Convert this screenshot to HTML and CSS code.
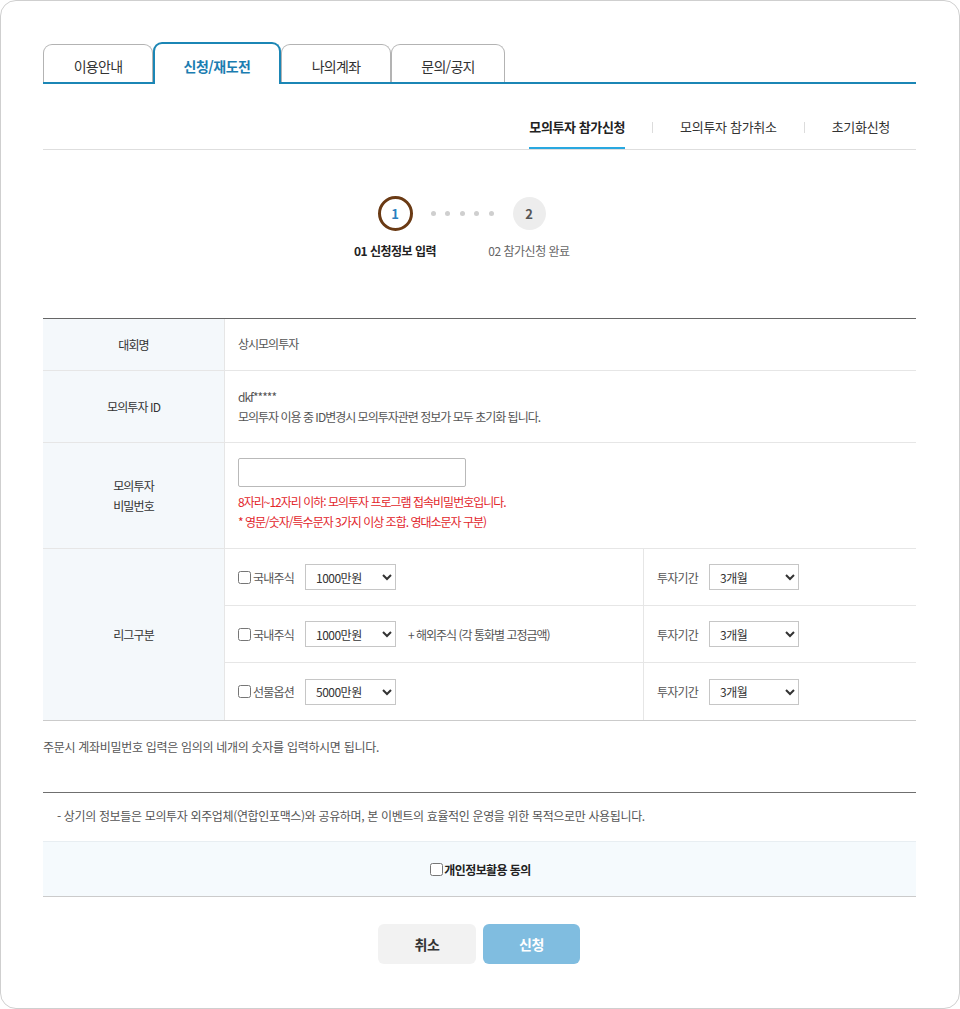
FILE: index.html
```html
<!DOCTYPE html>
<html lang="ko">
<head>
<meta charset="utf-8">
<title>모의투자 참가신청</title>
<link rel="stylesheet" href="styles.css">
</head>
<body>
<div class="frame">
  <div class="tabs">
    <div class="tab t1">이용안내</div>
    <div class="tab t2 active">신청/재도전</div>
    <div class="tab t3">나의계좌</div>
    <div class="tab t4">문의/공지</div>
  </div>

  <div class="subtabs">
    <div class="subtab on">모의투자 참가신청</div>
    <span class="sep"></span>
    <div class="subtab">모의투자 참가취소</div>
    <span class="sep"></span>
    <div class="subtab">초기화신청</div>
  </div>

  <div class="stepper">
    <div class="step">
      <div class="circ-wrap"><div class="circ cur">1</div></div>
      <div class="step-label cur">01 신청정보 입력</div>
    </div>
    <div class="dots"><i></i><i></i><i></i><i></i><i></i></div>
    <div class="step">
      <div class="circ-wrap"><div class="circ next">2</div></div>
      <div class="step-label">02 참가신청 완료</div>
    </div>
  </div>

  <div class="form">
    <div class="row r1">
      <div class="th">대회명</div>
      <div class="td">상시모의투자</div>
    </div>
    <div class="row r2">
      <div class="th">모의투자 ID</div>
      <div class="td lines">
        <div>dkf*****</div>
        <div>모의투자 이용 중 ID변경시 모의투자관련 정보가 모두 초기화 됩니다.</div>
      </div>
    </div>
    <div class="row r3">
      <div class="th lines2">모의투자<br>비밀번호</div>
      <div class="td pw">
        <input type="password" class="pw-input">
        <div class="red">8자리~12자리 이하: 모의투자 프로그램 접속비밀번호입니다.</div>
        <div class="red">* 영문/숫자/특수문자 3가지 이상 조합. 영대소문자 구분)</div>
      </div>
    </div>
    <div class="row league">
      <div class="th">리그구분</div>
      <div class="subs">
        <div class="sub">
          <div class="opt">
            <label class="chk"><input type="checkbox">국내주식</label>
            <select class="sel"><option>1000만원</option></select>
          </div>
          <div class="per">
            <span class="per-label">투자기간</span>
            <select class="sel"><option>3개월</option></select>
          </div>
        </div>
        <div class="sub">
          <div class="opt">
            <label class="chk"><input type="checkbox">국내주식</label>
            <select class="sel"><option>1000만원</option></select>
            <span class="extra">+ 해외주식 (각 통화별 고정금액)</span>
          </div>
          <div class="per">
            <span class="per-label">투자기간</span>
            <select class="sel"><option>3개월</option></select>
          </div>
        </div>
        <div class="sub">
          <div class="opt">
            <label class="chk"><input type="checkbox">선물옵션</label>
            <select class="sel"><option>5000만원</option></select>
          </div>
          <div class="per">
            <span class="per-label">투자기간</span>
            <select class="sel"><option>3개월</option></select>
          </div>
        </div>
      </div>
    </div>
  </div>

  <p class="note">주문시 계좌비밀번호 입력은 임의의 네개의 숫자를 입력하시면 됩니다.</p>

  <div class="agree-wrap">
    <p class="info">- 상기의 정보들은 모의투자 외주업체(연합인포맥스)와 공유하며, 본 이벤트의 효율적인 운영을 위한 목적으로만 사용됩니다.</p>
    <div class="agree">
      <label class="agree-chk"><input type="checkbox">개인정보활용 동의</label>
    </div>
  </div>

  <div class="buttons">
    <button class="btn cancel">취소</button>
    <button class="btn submit">신청</button>
  </div>
</div>
</body>
</html>
```

FILE: styles.css
```css
* { box-sizing: border-box; }
html, body { margin: 0; padding: 0; background: #fff; }
body {
  font-family: "Noto Sans CJK KR", "Noto Sans", sans-serif;
  color: #333;
  font-size: 12px;
}
.frame {
  width: 960px;
  height: 1009px;
  border: 1px solid #cfcfcf;
  border-radius: 16px;
  padding: 41px 43px 0 42px;
  overflow: hidden;
}

/* tabs */
.tabs {
  display: flex;
  align-items: flex-end;
  height: 42px;
  border-bottom: 2px solid #1b86b5;
}
.tab {
  height: 38px;
  border: 1px solid #b3b3b3;
  border-bottom: none;
  border-radius: 9px 9px 0 0;
  background: #fff;
  display: flex;
  align-items: center;
  justify-content: center;
  padding-top: 4px;
  font-size: 14px;
  letter-spacing: -0.7px;
  color: #333;
}
.t1 { width: 110px; }
.t2 { width: 128px; }
.t3 { width: 110px; }
.t4 { width: 114px; }
.tab.active {
  height: 42px;
  margin-bottom: -2px;
  border: 2px solid #1b86b5;
  border-bottom: none;
  color: #1a7db1;
  font-weight: 700;
  letter-spacing: -0.5px;
  position: relative;
  z-index: 1;
}

/* sub tabs */
.subtabs {
  display: flex;
  justify-content: flex-end;
  align-items: flex-start;
  border-bottom: 1px solid #dedede;
  padding-right: 26px;
  gap: 27px;
  height: 66px;
}
.subtab {
  padding-top: 34px;
  line-height: 18px;
  height: 65px;
  font-size: 13px;
  letter-spacing: -0.3px;
  color: #333;
  border-bottom: 2px solid transparent;
}
.subtab.on {
  font-weight: 700;
  color: #222;
  border-bottom-color: #29a8e0;
  letter-spacing: -0.4px;
}
.sep {
  width: 1px;
  height: 11px;
  background: #dcdcdc;
  margin-top: 38px;
}

/* stepper */
.stepper {
  display: flex;
  margin-top: 46px;
  padding-left: 302px;
}
.step {
  width: 100px;
  display: flex;
  flex-direction: column;
  align-items: center;
}
.circ-wrap {
  height: 35px;
  display: flex;
  align-items: center;
}
.circ {
  border-radius: 50%;
  display: flex;
  align-items: center;
  justify-content: center;
  font-weight: 700;
  font-size: 13px;
}
.circ.cur {
  width: 35px;
  height: 35px;
  border: 3px solid #6a3a14;
  color: #2a7fc0;
}
.circ.next {
  width: 33px;
  height: 33px;
  background: #ededed;
  color: #555;
}
.step-label {
  margin-top: 12px;
  line-height: 16px;
  font-size: 12px;
  white-space: nowrap;
  letter-spacing: -0.5px;
  color: #666;
}
.step-label.cur { color: #222; font-weight: 700; }
.dots {
  width: 34px;
  height: 35px;
  display: flex;
  align-items: center;
  justify-content: center;
  gap: 9.5px;
}
.dots i {
  flex: none;
  width: 5px;
  height: 5px;
  border-radius: 50%;
  background: #cfcfcf;
}

/* form table */
.form {
  margin-top: 59px;
  border-top: 1px solid #666;
  border-bottom: 1px solid #cbcbcb;
}
.row {
  display: grid;
  grid-template-columns: 182px 1fr;
  border-bottom: 1px solid #e6e6e6;
}
.row.league { border-bottom: none; }
.th {
  background: #f4f8fb;
  border-right: 1px solid #e6e6e6;
  display: flex;
  align-items: center;
  justify-content: center;
  text-align: center;
  color: #333;
  letter-spacing: -0.9px;
  line-height: 20px;
}
.td {
  padding-left: 13px;
  color: #555;
  letter-spacing: -1px;
  display: flex;
  flex-direction: column;
  justify-content: center;
  line-height: 20px;
}
.r1 { height: 52px; }
.r1 .td { padding-bottom: 1px; }
.r2 { height: 72px; }
.r3 { height: 106px; }
.pw { justify-content: flex-start; padding-top: 15px; }
.pw-input {
  width: 228px;
  height: 29px;
  border: 1px solid #b9b9b9;
  border-radius: 2px;
  margin: 0 0 5px 0;
  background: #fff;
}
.red { color: #e2262b; }

.subs { display: flex; flex-direction: column; }
.sub {
  display: grid;
  grid-template-columns: 418px 1fr;
  height: 57px;
  border-bottom: 1px solid #e6e6e6;
}
.sub:last-child { border-bottom: none; height: 57px; }
.opt, .per {
  display: flex;
  align-items: center;
  color: #555;
  letter-spacing: -0.8px;
}
.opt { padding-left: 13px; }
.per { padding-left: 13px; border-left: 1px solid #e6e6e6; }
.chk {
  display: flex;
  align-items: center;
  margin-right: 11px;
}
.chk input, .agree-chk input {
  width: 13px;
  height: 13px;
  margin: 0 2px 0 0;
}
.sel {
  width: 91px;
  height: 26px;
  border: 1px solid #c6c6c6;
  border-radius: 0;
  background: #fff;
  font-family: "Noto Sans CJK KR", "Noto Sans", sans-serif;
  font-size: 12px;
  color: #333;
  padding-left: 6px;
  letter-spacing: -0.5px;
}
.per .sel { width: 90px; }
.extra { margin-left: 12px; letter-spacing: -1px; }
.per-label { margin-right: 11px; }

.note {
  margin: 17px 0 0 0;
  line-height: 18px;
  color: #555;
  letter-spacing: -0.3px;
}
.agree-wrap {
  margin-top: 36px;
  border-top: 1px solid #6f6f6f;
  border-bottom: 1px solid #cbcbcb;
}
.info {
  margin: 0;
  padding: 14px 0 16px 14px;
  line-height: 18px;
  color: #555;
  letter-spacing: -0.35px;
}
.agree {
  background: #f5fafd;
  border-top: 1px solid #e8eef2;
  height: 55px;
  display: flex;
  align-items: center;
  justify-content: center;
}
.agree-chk {
  display: flex;
  align-items: center;
  font-weight: 700;
  font-size: 12px;
  color: #222;
  letter-spacing: -0.6px;
  padding-left: 2px;
}
.agree-chk input { margin-right: 1px; }

.buttons {
  display: flex;
  justify-content: center;
  gap: 7px;
  margin-top: 27px;
  padding-right: 1px;
}
.btn {
  width: 98px;
  height: 40px;
  border: none;
  border-radius: 6px;
  font-family: "Noto Sans CJK KR", "Noto Sans", sans-serif;
  font-size: 14px;
  font-weight: 700;
  letter-spacing: -0.5px;
}
.cancel { background: #f2f2f2; color: #333; }
.submit { background: #80bde0; color: #fff; width: 97px; }
```
